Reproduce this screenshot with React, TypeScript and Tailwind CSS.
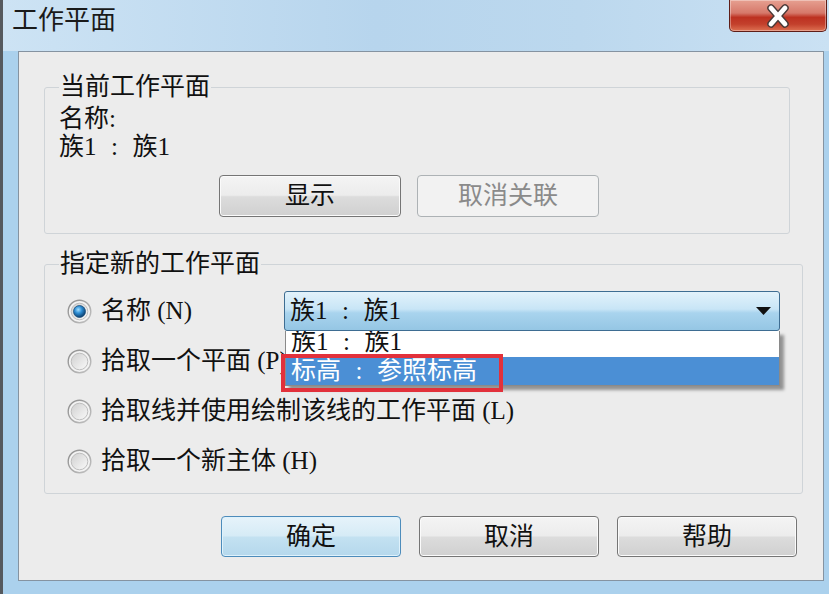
const font = "font-['Liberation_Serif','Noto_Sans_CJK_SC',serif]";

function Sep() {
  return <span className="inline-block w-[36px] text-center">:</span>;
}

function Radio({ checked }: { checked?: boolean }) {
  return (
    <svg width="25" height="25" viewBox="0 0 25 25" className="shrink-0">
      <defs>
        <linearGradient id="rOuter" x1="0" y1="0" x2="1" y2="1">
          <stop offset="0" stopColor="#8c8c8c" />
          <stop offset="1" stopColor="#c4c4c4" />
        </linearGradient>
        <linearGradient id="rInner" x1="0" y1="0" x2="1" y2="1">
          <stop offset="0" stopColor="#cfcfcf" />
          <stop offset="1" stopColor="#fafafa" />
        </linearGradient>
        <radialGradient id="rDot" cx="0.4" cy="0.35" r="0.65">
          <stop offset="0" stopColor="#a6e1ff" />
          <stop offset="0.45" stopColor="#2f8fd6" />
          <stop offset="1" stopColor="#0b3f6e" />
        </radialGradient>
      </defs>
      <circle cx="12.5" cy="12.5" r="11.3" fill="#f3f3f3" stroke="url(#rOuter)" strokeWidth="1.4" />
      <circle cx="12.5" cy="12.5" r="8.3" fill="url(#rInner)" stroke="#bdbdbd" strokeWidth="1" />
      {checked && <circle cx="12.5" cy="12.5" r="6" fill="url(#rDot)" stroke="#1d4f7a" strokeWidth="0.8" />}
    </svg>
  );
}

interface BtnProps {
  label: string;
  kind?: "normal" | "default" | "disabled";
  wide?: boolean;
}

function Btn({ label, kind = "normal", wide }: BtnProps) {
  const base = "flex items-center justify-center rounded-[4px] border text-[25px] leading-[28px]";
  const size = wide ? "w-[182px] h-[42px]" : "w-[180px] h-[41px]";
  const look =
    kind === "default"
      ? "border-[#4d8cbb] bg-[linear-gradient(#e6f3fa_0%,#d6ebf6_48%,#c3e1f1_52%,#b5d8ec_100%)] shadow-[inset_0_0_0_1px_#dff2fc] text-[#111]"
      : kind === "disabled"
      ? "border-[#adb2b5] bg-[#f2f2f2] text-[#8a8a8a]"
      : "border-[#757575] bg-[linear-gradient(#f4f4f4_0%,#ececec_48%,#dcdcdc_52%,#d0d0d0_100%)] shadow-[inset_0_0_0_1px_#fbfbfb] text-[#111]";
  return <div className={`${base} ${size} ${look}`}>{label}</div>;
}

export default function App() {
  return (
    <div className={`${font} w-[829px] h-[594px] overflow-hidden bg-[#abd1ed] border-l-[3px] border-[#55595e] flex flex-col text-[#111]`}>
      {/* title bar */}
      <div className="h-[51px] shrink-0 flex items-start justify-between bg-[linear-gradient(90deg,#cde3f4_0%,#b7d5ed_45%,#bcd8ee_70%,#cae1f3_100%)]">
        <div className="pl-[9px] mt-[6px] text-[26px] leading-[30px] text-[#1a1a1a]">工作平面</div>
        <div className="mr-[2px] w-[98px] h-[32px] flex items-center justify-center rounded-b-[5px] border border-t-0 border-[#5e1d17] bg-[linear-gradient(#e6a091_0%,#d6786a_42%,#bd3121_56%,#c3402c_78%,#dd7152_100%)] shadow-[inset_0_0_0_1px_rgba(255,255,255,0.35)]">
          <svg width="26" height="24" viewBox="0 0 26 24">
            <path d="M6 4 L20 20 M20 4 L6 20" stroke="#4a3a38" strokeWidth="7.5" strokeLinecap="round" />
            <path d="M6 4 L20 20 M20 4 L6 20" stroke="#ffffff" strokeWidth="4.8" strokeLinecap="round" />
          </svg>
        </div>
      </div>

      {/* client area */}
      <div className="ml-[15px] w-[806px] h-[530px] shrink-0 border border-[#8593a1] bg-[#ececec] flex flex-col">
        {/* current work plane */}
        <fieldset className="mt-[21px] ml-[25px] w-[746px] rounded-[3px] border border-[#cfd4d8] pl-[14px] pt-[4px] pb-[16px]">
          <legend className="px-[1px] text-[25px] leading-[28px]">当前工作平面</legend>
          <div className="text-[25px] leading-[28px]">名称:</div>
          <div className="text-[25px] leading-[28px]">
            族1<Sep />族1
          </div>
          <div className="mt-[14px] ml-[160px] flex gap-[16px]">
            <Btn label="显示" wide />
            <Btn label="取消关联" kind="disabled" wide />
          </div>
        </fieldset>

        {/* new work plane */}
        <fieldset className="mt-[16px] ml-[25px] w-[759px] rounded-[3px] border border-[#cfd4d8] pl-[14px] pt-[8px] pb-[7px]">
          <legend className="px-[1px] text-[25px] leading-[28px]">指定新的工作平面</legend>

          <div className="h-[50px] flex items-center relative z-10">
            <div className="w-[225px] flex items-center gap-[9px] pl-[8px]">
              <Radio checked />
              <span className="text-[25px] leading-[28px]">名称 (N)</span>
            </div>
            <div className="relative w-[496px] h-[40px] rounded-[3px] border border-[#3e6d92] bg-[linear-gradient(#e2f2fb_0%,#c8e5f6_45%,#a9d4ee_55%,#95c6e4_100%)] flex items-center justify-between pl-[5px] pr-[8px]">
              <span className="text-[25px] leading-[28px]">
                族1<Sep />族1
              </span>
              <svg width="15" height="8" viewBox="0 0 15 8">
                <polygon points="0,0 15,0 7.5,8" fill="#111" />
              </svg>
              {/* open dropdown list */}
              <div className="absolute left-[0px] top-[39px] w-[495px] border border-[#8a8a8a] border-t-0 bg-white shadow-[4px_4px_3px_rgba(0,0,0,0.38)]">
                <div className="h-[26px] overflow-hidden pl-[5px]">
                  <div className="-mt-[3px] text-[25px] leading-[28px]">
                    族1<Sep />族1
                  </div>
                </div>
                <div className="h-[28px] bg-[#4b8fd5] pl-[5px] text-[25px] leading-[28px] text-white">
                  标高<Sep />参照标高
                </div>
                <div className="absolute left-[-5px] top-[23px] w-[222px] h-[38px] border-[4px] border-[#e2313b]" />
              </div>
            </div>
          </div>

          <div className="h-[50px] flex items-center gap-[9px] pl-[8px]">
            <Radio />
            <span className="text-[25px] leading-[28px]">拾取一个平面 (P)</span>
          </div>
          <div className="h-[50px] flex items-center gap-[9px] pl-[8px]">
            <Radio />
            <span className="text-[25px] leading-[28px]">拾取线并使用绘制该线的工作平面 (L)</span>
          </div>
          <div className="h-[50px] flex items-center gap-[9px] pl-[8px]">
            <Radio />
            <span className="text-[25px] leading-[28px]">拾取一个新主体 (H)</span>
          </div>
        </fieldset>

        {/* dialog buttons */}
        <div className="mt-[22px] ml-[202px] flex gap-[18px]">
          <Btn label="确定" kind="default" />
          <Btn label="取消" />
          <Btn label="帮助" />
        </div>
      </div>
    </div>
  );
}
